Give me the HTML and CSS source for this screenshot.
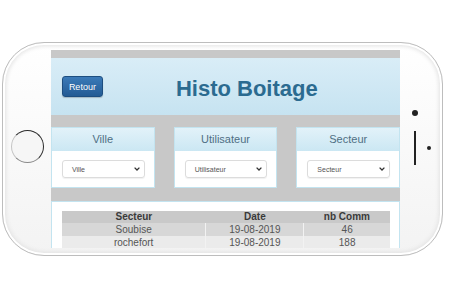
FILE: index.html
```html
<!DOCTYPE html>
<html lang="fr">
<head>
    <meta charset="UTF-8">
    <meta name="viewport" content="width=device-width, initial-scale=1.0">
    <title>Histo Boitage</title>
    <link rel="stylesheet" href="styles.css">
</head>
<body>
    <!-- Phone mockup -->
    <div class="phone">
        <div class="phone-left">
            <div class="home-button"></div>
        </div>

        <div class="screen">
            <div class="header">
                <button class="btn-retour">Retour</button>
                <h1 class="title">Histo Boitage</h1>
            </div>

            <div class="filters">
                <div class="card">
                    <div class="card-head">Ville</div>
                    <div class="card-body">
                        <div class="select">
                            <span>Ville</span>
                            <svg width="6" height="4" viewBox="0 0 6 4"><path d="M0.6 0.6 L3 3 L5.4 0.6" fill="none" stroke="#333" stroke-width="1.3"/></svg>
                        </div>
                    </div>
                </div>
                <div class="card">
                    <div class="card-head">Utilisateur</div>
                    <div class="card-body">
                        <div class="select">
                            <span>Utilisateur</span>
                            <svg width="6" height="4" viewBox="0 0 6 4"><path d="M0.6 0.6 L3 3 L5.4 0.6" fill="none" stroke="#333" stroke-width="1.3"/></svg>
                        </div>
                    </div>
                </div>
                <div class="card">
                    <div class="card-head">Secteur</div>
                    <div class="card-body">
                        <div class="select">
                            <span>Secteur</span>
                            <svg width="6" height="4" viewBox="0 0 6 4"><path d="M0.6 0.6 L3 3 L5.4 0.6" fill="none" stroke="#333" stroke-width="1.3"/></svg>
                        </div>
                    </div>
                </div>
            </div>

            <div class="table-card">
                <table class="histo">
                    <thead>
                        <tr><th class="col-secteur">Secteur</th><th class="col-date">Date</th><th>nb Comm</th></tr>
                    </thead>
                    <tbody>
                        <tr><td>Soubise</td><td>19-08-2019</td><td>46</td></tr>
                        <tr><td>rochefort</td><td>19-08-2019</td><td>188</td></tr>
                    </tbody>
                </table>
            </div>
        </div>

        <div class="phone-right">
            <div class="camera"></div>
            <div class="sensors">
                <div class="speaker"></div>
                <div class="sensor"></div>
            </div>
        </div>
    </div>
</body>
</html>
```

FILE: styles.css
```css
/* Global styles */
body {
    margin: 0;
    padding: 0;
    width: 450px;
    height: 300px;
    overflow: hidden;
    background-color: #fff;
    font-family: "Liberation Sans", Arial, sans-serif;
}

/* Phone body */
.phone {
    display: flex;
    margin: 42px 0 0 2px;
    width: 439px;
    height: 212px;
    border: 1px solid #bdbdbd;
    border-radius: 42px;
    background: linear-gradient(#ffffff, #f3f3f3);
    box-shadow: inset 0 0 0 2px #fff, inset 0 0 4px 3px #e2e2e2;
}

.phone-left {
    width: 47px;
    display: flex;
    align-items: center;
    justify-content: center;
    padding-left: 1px;
    padding-bottom: 6px;
}

.home-button {
    width: 31px;
    height: 31px;
    border-radius: 50%;
    border: 1.5px solid #2a2a2a;
    border-left-color: #c4c4c4;
    border-bottom-color: #8a8a8a;
    background: #f6f6f6;
}

.phone-right {
    width: 42px;
    padding-top: 67px;
}

.camera {
    width: 6px;
    height: 6px;
    margin-left: 12px;
    border-radius: 50%;
    background-color: #222;
}

.sensors {
    display: flex;
    align-items: center;
    margin-top: 15px;
    padding-left: 14px;
}

.speaker {
    width: 2px;
    height: 34px;
    background-color: #222;
}

.sensor {
    width: 4px;
    height: 4px;
    margin-left: 11px;
    border-radius: 50%;
    background-color: #222;
}

/* Screen */
.screen {
    width: 350px;
    height: 198px;
    margin-top: 7px;
    padding-top: 8px;
    box-sizing: border-box;
    overflow: hidden;
    background-color: #c8c8c8;
}

.header {
    display: flex;
    align-items: center;
    height: 57px;
    padding-left: 11px;
    background: linear-gradient(#d9edf7, #c6e3f1);
}

.btn-retour {
    width: 41px;
    height: 21px;
    padding: 0;
    border: 1px solid #1d4e80;
    border-radius: 3px;
    background: linear-gradient(#3b7ab8, #235b94);
    color: #fff;
    font-family: "Liberation Sans", Arial, sans-serif;
    font-size: 9px;
    box-shadow: 0 1px 1px rgba(0, 0, 0, 0.2);
}

.title {
    margin: 5px 0 0 73px;
    font-size: 22px;
    font-weight: bold;
    color: #2b6b90;
}

/* Filter cards */
.filters {
    display: flex;
    gap: 19px;
    margin-top: 12px;
}

.card {
    width: 104px;
    height: 61px;
    box-sizing: border-box;
    border: 1px solid #c3e4f0;
    background-color: #fff;
}

.card-head {
    height: 23px;
    line-height: 22px;
    text-align: center;
    font-size: 11px;
    color: #4f6f84;
    background: linear-gradient(#e2f2f9, #cbe7f3);
}

.card-body {
    padding: 9px 9px 0 10px;
}

.select {
    display: flex;
    align-items: center;
    justify-content: space-between;
    height: 18px;
    box-sizing: border-box;
    padding: 0 4px 0 9px;
    border: 1px solid #dcdcdc;
    border-radius: 3px;
    box-shadow: 0 1px 1px rgba(0, 0, 0, 0.06);
    font-size: 7px;
    color: #555;
}

/* Table card */
.table-card {
    margin-top: 13px;
    height: 60px;
    padding: 9px 10px 0;
    border: 1px solid #c3e4f0;
    background-color: #fff;
}

.histo {
    width: 328px;
    border-collapse: collapse;
    font-size: 10px;
}

.histo th,
.histo td {
    padding: 0;
    height: 12px;
    line-height: 12px;
    text-align: center;
    border-left: 1px solid #f2f2f2;
}

.histo th:first-child,
.histo td:first-child {
    border-left: none;
}

.histo th {
    background-color: #c9c9c9;
    color: #3a3a3a;
    font-weight: bold;
    border-left: none;
}

.histo td {
    height: 13px;
    color: #555;
}

.histo tbody tr:nth-child(1) {
    background-color: #d7d7d7;
}

.histo tbody tr:nth-child(2) {
    background-color: #ebebeb;
}

.col-secteur {
    width: 144px;
}

.col-date {
    width: 98px;
}
```
